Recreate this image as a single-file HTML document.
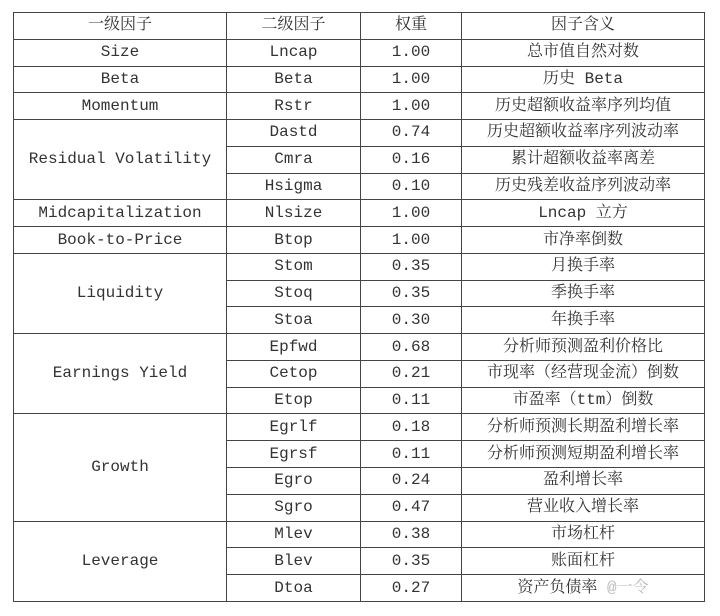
<!DOCTYPE html>
<html><head><meta charset="utf-8"><style>
html,body{margin:0;padding:0;background:#fff;width:720px;height:616px;overflow:hidden}
table{position:absolute;left:13px;top:12px;border-collapse:collapse;width:691px;height:590px;table-layout:fixed;
font-family:"Liberation Mono","Noto Serif CJK SC",monospace;font-size:16px;color:#333}
tr{height:25.65px}
td{border:1px solid #444;padding:0;text-align:center;line-height:17px}
</style></head><body>
<table>
<col style="width:213px"><col style="width:134px"><col style="width:101px"><col style="width:243px">
<tr><td>一级因子</td><td>二级因子</td><td>权重</td><td>因子含义</td></tr>
<tr><td>Size</td><td>Lncap</td><td>1.00</td><td>总市值自然对数</td></tr>
<tr><td>Beta</td><td>Beta</td><td>1.00</td><td>历史 Beta</td></tr>
<tr><td>Momentum</td><td>Rstr</td><td>1.00</td><td>历史超额收益率序列均值</td></tr>
<tr><td rowspan="3">Residual Volatility</td><td>Dastd</td><td>0.74</td><td>历史超额收益率序列波动率</td></tr>
<tr><td>Cmra</td><td>0.16</td><td>累计超额收益率离差</td></tr>
<tr><td>Hsigma</td><td>0.10</td><td>历史残差收益序列波动率</td></tr>
<tr><td>Midcapitalization</td><td>Nlsize</td><td>1.00</td><td>Lncap 立方</td></tr>
<tr><td>Book-to-Price</td><td>Btop</td><td>1.00</td><td>市净率倒数</td></tr>
<tr><td rowspan="3">Liquidity</td><td>Stom</td><td>0.35</td><td>月换手率</td></tr>
<tr><td>Stoq</td><td>0.35</td><td>季换手率</td></tr>
<tr><td>Stoa</td><td>0.30</td><td>年换手率</td></tr>
<tr><td rowspan="3">Earnings Yield</td><td>Epfwd</td><td>0.68</td><td>分析师预测盈利价格比</td></tr>
<tr><td>Cetop</td><td>0.21</td><td>市现率（经营现金流）倒数</td></tr>
<tr><td>Etop</td><td>0.11</td><td>市盈率（ttm）倒数</td></tr>
<tr><td rowspan="4">Growth</td><td>Egrlf</td><td>0.18</td><td>分析师预测长期盈利增长率</td></tr>
<tr><td>Egrsf</td><td>0.11</td><td>分析师预测短期盈利增长率</td></tr>
<tr><td>Egro</td><td>0.24</td><td>盈利增长率</td></tr>
<tr><td>Sgro</td><td>0.47</td><td>营业收入增长率</td></tr>
<tr><td rowspan="3">Leverage</td><td>Mlev</td><td>0.38</td><td>市场杠杆</td></tr>
<tr><td>Blev</td><td>0.35</td><td>账面杠杆</td></tr>
<tr><td>Dtoa</td><td>0.27</td><td>资产负债率 <span style="color:#bbb">@一令</span></td></tr>
</table>
</body></html>
